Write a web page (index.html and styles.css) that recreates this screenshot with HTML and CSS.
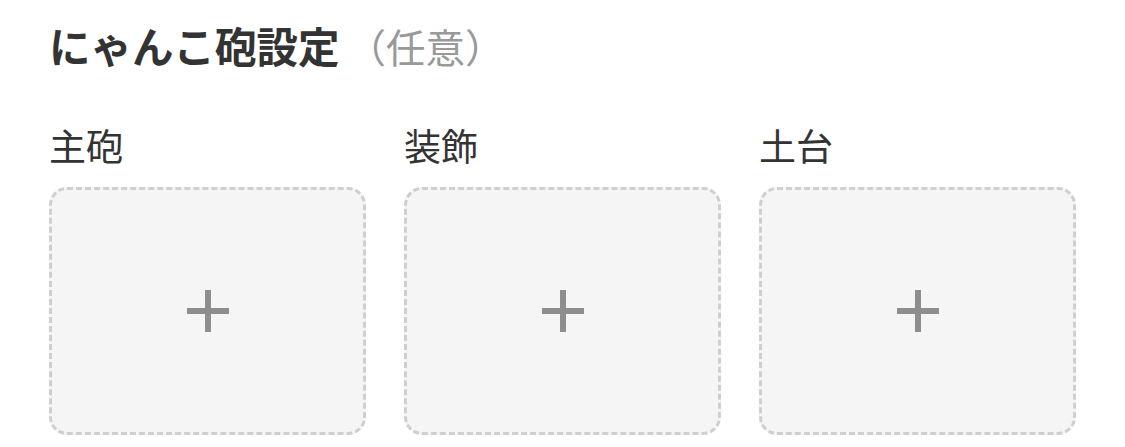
FILE: index.html
```html
<!DOCTYPE html>
<html lang="ja">
<head>
<meta charset="utf-8">
<link rel="stylesheet" href="styles.css">
</head>
<body>
<section class="panel">
  <h2 class="title">にゃんこ砲設定<span class="optional">（任意）</span></h2>
  <div class="slots">
    <div class="slot">
      <div class="slot-label">主砲</div>
      <button class="slot-box" type="button"><span class="plus"></span></button>
    </div>
    <div class="slot">
      <div class="slot-label">装飾</div>
      <button class="slot-box" type="button"><span class="plus"></span></button>
    </div>
    <div class="slot">
      <div class="slot-label">土台</div>
      <button class="slot-box" type="button"><span class="plus"></span></button>
    </div>
  </div>
</section>
</body>
</html>
```
FILE: styles.css
```css
html, body {
  margin: 0;
  padding: 0;
  background: #ffffff;
}
body {
  font-family: "Noto Sans CJK JP", "Noto Sans", sans-serif;
  color: #333333;
}
.panel {
  padding: 17px 49px 0 49px;
}
.title {
  margin: 0;
  font-size: 41.5px;
  line-height: 56px;
  font-weight: 700;
  color: #333333;
}
.optional {
  margin-left: 7px;
  font-size: 39.5px;
  font-weight: 400;
  color: #999999;
}
.slots {
  display: grid;
  grid-template-columns: repeat(3, 317px);
  column-gap: 38px;
  margin-top: 46px;
}
.slot-label {
  font-size: 37px;
  line-height: 50px;
  color: #333333;
}
.slot-box {
  display: flex;
  align-items: center;
  justify-content: center;
  box-sizing: border-box;
  width: 317px;
  height: 248px;
  margin-top: 17px;
  padding: 0;
  background: #f5f5f5;
  border: 3px dashed #cfcfcf;
  border-radius: 18px;
}
.plus {
  position: relative;
  width: 42px;
  height: 42px;
}
.plus::before,
.plus::after {
  content: "";
  position: absolute;
  background: #8e8e8e;
}
.plus::before {
  left: 0;
  top: 18px;
  width: 42px;
  height: 6px;
}
.plus::after {
  left: 18px;
  top: 0;
  width: 6px;
  height: 42px;
}
```
